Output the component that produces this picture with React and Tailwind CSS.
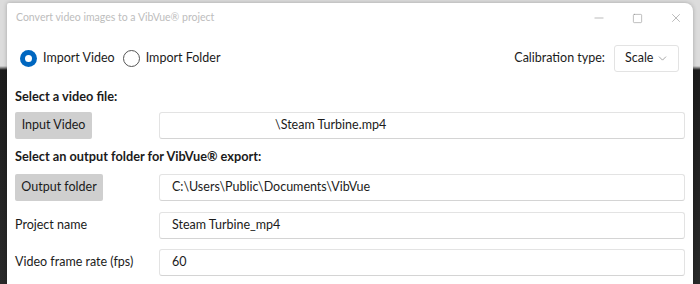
import React from "react";
import { Minus, Square, X, ChevronDown } from "lucide-react";

function Radio({ checked, label }) {
  return (
    <label className="flex items-center gap-[6px]">
      {checked ? (
        <span className="w-[17px] h-[17px] rounded-full bg-[#0067c0] flex items-center justify-center">
          <span className="w-[7px] h-[7px] rounded-full bg-white" />
        </span>
      ) : (
        <span className="w-[17px] h-[17px] rounded-full border border-[#555]" />
      )}
      <span>{label}</span>
    </label>
  );
}

function Field({ value, indent = "pl-[12px]" }) {
  return (
    <div
      className={`w-[526px] h-[27px] border border-[#e3e3e3] border-b-[#d4d4d4] rounded-[3px] bg-white flex items-center ${indent}`}
    >
      {value}
    </div>
  );
}

export default function App() {
  return (
    <div
      className="w-[700px] h-[284px] overflow-hidden pt-[3px] pl-[7px] bg-[linear-gradient(to_bottom,#dcdcdc_0,#dcdcdc_66px,#1c1c1c_70px,#2a2a2a_100%)] text-[12.5px] text-[#1b1b1b]"
      style={{ fontFamily: 'Lato, "Open Sans", sans-serif' }}
    >
      <div className="w-[686px] h-[290px] bg-white rounded-tr-[8px] rounded-tl-[2px] shadow-[0_0_4px_rgba(0,0,0,0.25)]">
        {/* title bar */}
        <div className="h-[30px] flex items-center justify-between pl-[9px] pr-[10px]">
          <span className="text-[10.5px] text-[#bdbdbd]">Convert video images to a VibVue® project</span>
          <div className="flex items-center gap-[26px] text-[#8a8a8a]">
            <Minus className="w-[14px] h-[14px]" strokeWidth={1} />
            <Square className="w-[11px] h-[11px]" strokeWidth={1.2} />
            <X className="w-[14px] h-[14px]" strokeWidth={1} />
          </div>
        </div>

        <div className="px-[8px]">
          {/* radio row */}
          <div className="flex items-center justify-between mt-[12px] h-[27px] pr-[6px]">
            <div className="flex items-center gap-[8px] pl-[5px]">
              <Radio checked label="Import Video" />
              <Radio label="Import Folder" />
            </div>
            <div className="flex items-center gap-[9px]">
              <span>Calibration type:</span>
              <div className="w-[65px] h-[27px] border border-[#e3e3e3] rounded-[3px] flex items-center justify-between pl-[10px] pr-[9px]">
                <span>Scale</span>
                <ChevronDown className="w-[13px] h-[13px] text-[#777]" strokeWidth={1.2} />
              </div>
            </div>
          </div>

          <div className="font-bold text-[12.75px] mt-[15px] leading-[18px]">Select a video file:</div>
          <div className="flex items-center justify-between mt-[7px]">
            <button className="w-[77px] h-[27px] bg-[#cfcfcf] rounded-[2px]">Input Video</button>
            <Field value="\Steam Turbine.mp4" indent="pl-[115px]" />
          </div>

          <div className="font-bold text-[12.75px] mt-[8px] leading-[18px]">Select an output folder for VibVue® export:</div>
          <div className="flex items-center justify-between mt-[9px]">
            <button className="w-[88px] h-[27px] bg-[#cfcfcf] rounded-[2px]">Output folder</button>
            <Field value="C:\Users\Public\Documents\VibVue" />
          </div>

          <div className="flex items-center justify-between mt-[11px]">
            <span>Project name</span>
            <Field value="Steam Turbine_mp4" />
          </div>

          <div className="flex items-center justify-between mt-[10px]">
            <span>Video frame rate (fps)</span>
            <Field value="60" />
          </div>
        </div>
      </div>
    </div>
  );
}
